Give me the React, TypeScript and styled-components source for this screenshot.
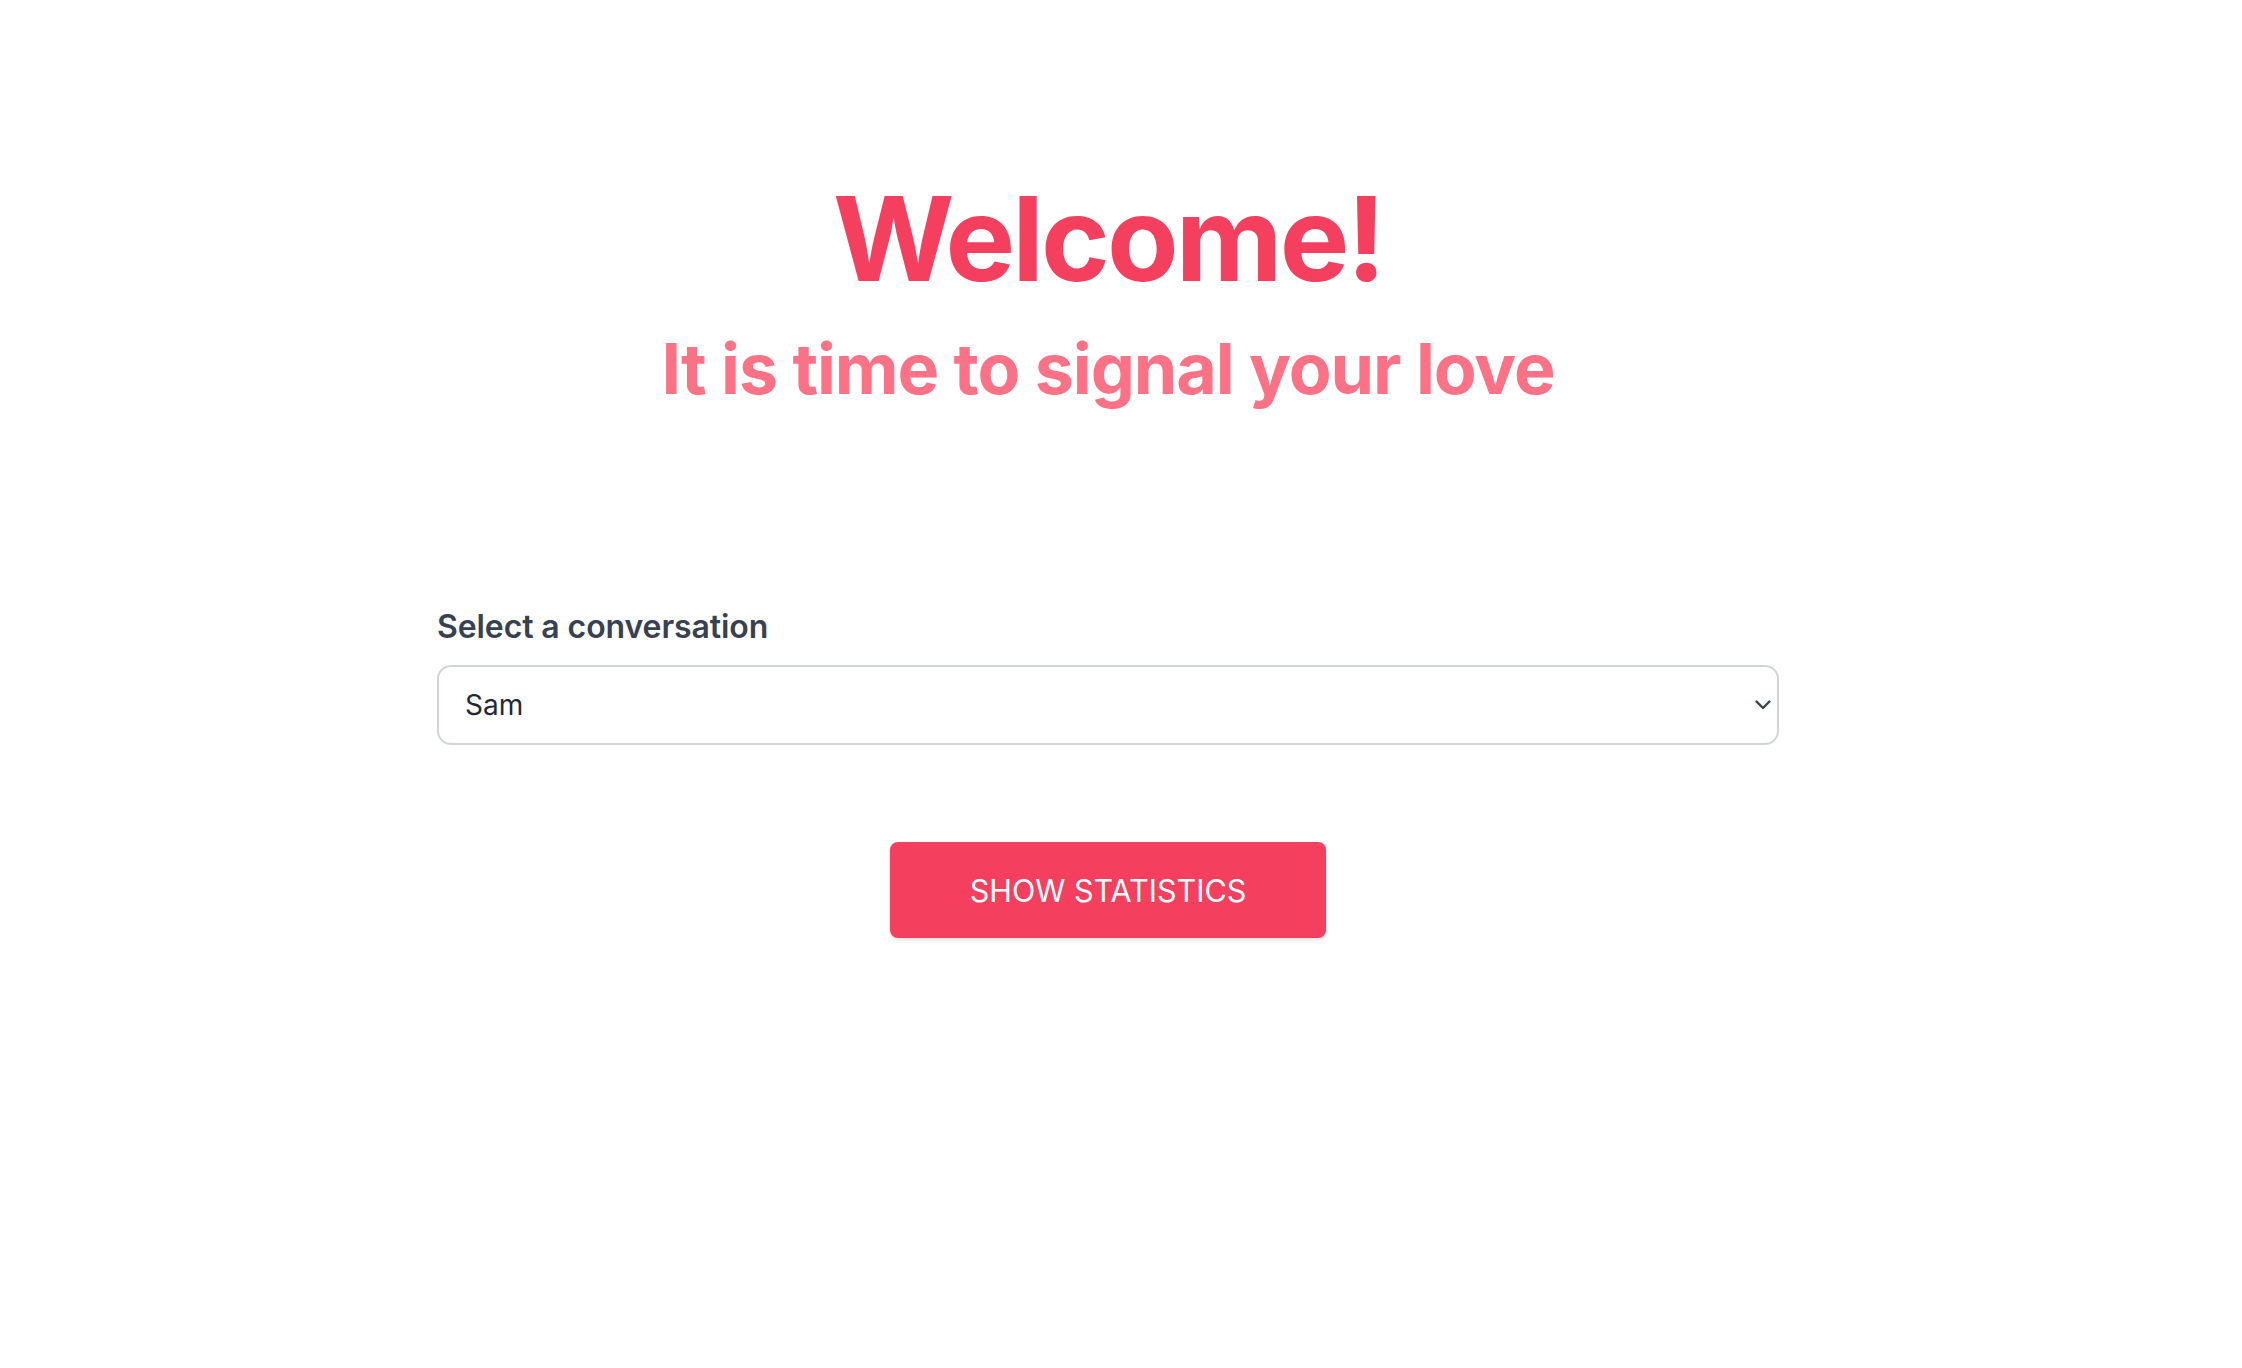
import React, { useState } from 'react'
import styled, { createGlobalStyle } from 'styled-components'

const GlobalStyle = createGlobalStyle`
  html, body {
    margin: 0;
    padding: 0;
    background: #ffffff;
    font-family: Inter, "Noto Sans", sans-serif;
  }
  * { box-sizing: border-box; }
`

const conversations = ['Sam', 'Alex', 'Jordan']

const App: React.FC = () => {
  const [selected, setSelected] = useState('Sam')

  return (
    <>
      <GlobalStyle />
      <Page>
        <Header>
          <Title>Welcome!</Title>
          <Subtitle>It is time to signal your love</Subtitle>
        </Header>

        <Form>
          <Label htmlFor="conversation">Select a conversation</Label>
          <SelectWrap>
            <Select
              id="conversation"
              value={selected}
              onChange={(e: React.ChangeEvent<HTMLSelectElement>) => setSelected(e.target.value)}
            >
              {conversations.map((name) => (
                <option key={name} value={name}>{name}</option>
              ))}
            </Select>
            <Chevron viewBox="0 0 16 10" aria-hidden="true">
              <path d="M1.5 1.5 L8 8 L14.5 1.5" />
            </Chevron>
          </SelectWrap>

          <Button type="button">Show statistics</Button>
        </Form>
      </Page>
    </>
  )
}

export default App



// Styled
const Page = styled.main`
  display: flex;
  flex-direction: column;
  align-items: center;
  min-height: 1368px;
  padding: 180px 26px 0 0;
`

const Header = styled.header`
  display: flex;
  flex-direction: column;
  align-items: center;
  gap: 37px;
`

const Title = styled.h1`
  margin: 0;
  font-size: 117px;
  line-height: 1;
  font-weight: 700;
  letter-spacing: -0.025em;
  color: #f43f5e;
`

const Subtitle = styled.h2`
  margin: 0;
  font-size: 70px;
  line-height: 1;
  font-weight: 700;
  letter-spacing: -0.016em;
  color: #fb7185;
`

const Form = styled.section`
  display: flex;
  flex-direction: column;
  width: 1342px;
  margin-top: 199px;
`

const Label = styled.label`
  display: block;
  margin-bottom: 14px;
  font-size: 32px;
  line-height: 48px;
  font-weight: 600;
  letter-spacing: -0.003em;
  color: #374151;
`

const SelectWrap = styled.div`
  position: relative;
  width: 100%;
`

const Select = styled.select`
  appearance: none;
  width: 100%;
  height: 80px;
  padding: 0 70px 0 26px;
  border: 2px solid #d1d5db;
  border-radius: 14px;
  background: #ffffff;
  font-family: Inter, "Noto Sans", sans-serif;
  font-size: 28px;
  color: #1f2937;
  outline: none;
  cursor: pointer;
`

const Chevron = styled.svg`
  position: absolute;
  right: 8px;
  top: 50%;
  width: 16px;
  height: 10px;
  transform: translateY(-50%);
  pointer-events: none;
  fill: none;
  stroke: #374151;
  stroke-width: 2.4;
  stroke-linecap: round;
  stroke-linejoin: round;
`

const Button = styled.button`
  align-self: center;
  width: 436px;
  height: 96px;
  margin-top: 97px;
  border: none;
  border-radius: 8px;
  background-color: #f43f5e;
  box-shadow: 0 2px 4px rgba(0, 0, 0, 0.12);
  font-family: Inter, "Noto Sans", sans-serif;
  font-size: 30.5px;
  font-weight: 400;
  text-transform: uppercase;
  color: #ffffff;
  cursor: pointer;
`
